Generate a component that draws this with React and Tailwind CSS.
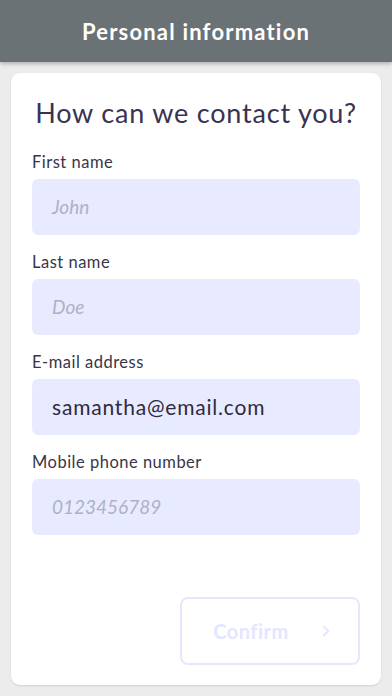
import React from 'react';
import { ChevronRight } from 'lucide-react';

const fields = [
    { label: 'First name', placeholder: 'John', value: '' },
    { label: 'Last name', placeholder: 'Doe', value: '' },
    { label: 'E-mail address', placeholder: 'name@email.com', value: 'samantha@email.com' },
    { label: 'Mobile phone number', placeholder: '0123456789', value: '' },
];

const Field = ({ label, placeholder, value }) => (
    <div className="flex flex-col">
        <label className="text-[16.5px] leading-[20px] tracking-[0.5px] text-[#3a3548] mb-[7px]">{label}</label>
        <div className="h-[56px] rounded-[6px] bg-[#e8ebff] px-[20px] flex items-center">
            {value ? (
                <span className="text-[21px] tracking-[0.8px] text-[#2f2a40]">{value}</span>
            ) : (
                <span className="text-[19px] italic text-[#aeb0c8]">{placeholder}</span>
            )}
        </div>
    </div>
);

export default function App() {
    return (
        <div className="w-[392px] h-[696px] bg-[#ececec] flex flex-col overflow-hidden" style={{ fontFamily: 'Lato, "Noto Sans", sans-serif' }}>
            <header className="h-[62px] bg-[#6b7275] flex items-center justify-center shadow-[0_2px_4px_rgba(0,0,0,0.25)] z-10">
                <h1 className="text-white text-[22px] tracking-[1.2px] font-bold">Personal information</h1>
            </header>

            <div className="flex-1 px-[11px] pt-[11px] pb-[11px]">
                <div className="h-full bg-white rounded-[9px] shadow-[0_1px_2px_rgba(0,0,0,0.12)] px-[21px] pt-[24px] pb-[20px] flex flex-col">
                    <h2 className="text-[27px] leading-[32px] tracking-[0.8px] text-[#3b3252] text-center mb-[23px]">How can we contact you?</h2>

                    <div className="flex flex-col gap-[17px]">
                        {fields.map(f => <Field key={f.label} {...f} />)}
                    </div>

                    <div className="mt-auto flex justify-end">
                        <button className="w-[180px] h-[68px] rounded-[8px] border-2 border-[#e4e8ff] flex items-center justify-center gap-[28px] pl-[8px] text-[#e2e6ff]">
                            <span className="text-[20px] tracking-[0.5px] font-bold">Confirm</span>
                            <ChevronRight className="w-[18px] h-[18px]" strokeWidth={2.5} />
                        </button>
                    </div>
                </div>
            </div>
        </div>
    );
}
